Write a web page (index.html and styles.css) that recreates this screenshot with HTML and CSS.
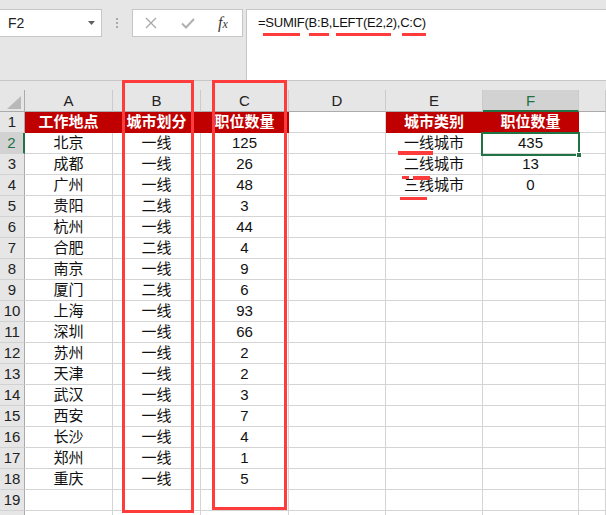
FILE: index.html
```html
<!DOCTYPE html>
<html lang="zh-CN">
<head>
<meta charset="utf-8">
<title>SUMIF 城市类别汇总</title>
<link rel="stylesheet" href="styles.css">
</head>
<body>
<div class="app">
  <header class="toolbar">
    <div class="namebox">
      <span class="name">F2</span>
      <svg class="dd" width="7" height="4" viewBox="0 0 7 4"><path d="M0 0H7L3.5 4Z"/></svg>
    </div>
    <div class="grip"><i></i><i></i><i></i></div>
    <div class="fbtns">
      <svg class="ic-x" width="12" height="12" viewBox="0 0 12 12"><path d="M1 1L11 11M11 1L1 11"/></svg>
      <svg class="ic-ok" width="14" height="11" viewBox="0 0 14 11"><path d="M1 5.5L5 9.5L13 1"/></svg>
      <span class="fx">f<span class="fx-x">x</span></span>
    </div>
    <div class="formula">=SUMIF(B:B,LEFT(E2,2),C:C)</div>
  </header>

  <div class="sheet">
    <div class="h corner"><svg width="14" height="13" viewBox="0 0 14 13"><path d="M14 0V13H0Z"/></svg></div>
    <div class="h">A</div><div class="h">B</div><div class="h">C</div><div class="h">D</div><div class="h">E</div><div class="h hs">F</div><div class="h"></div>

    <div class="r">1</div><div class="c t">工作地点</div><div class="c t">城市划分</div><div class="c t">职位数量</div><div class="c"></div><div class="c t">城市类别</div><div class="c t">职位数量</div><div class="c"></div>
    <div class="r rs">2</div><div class="c">北京</div><div class="c">一线</div><div class="c">125</div><div class="c"></div><div class="c">一线城市</div><div class="c sel">435</div><div class="c"></div>
    <div class="r">3</div><div class="c">成都</div><div class="c">一线</div><div class="c">26</div><div class="c"></div><div class="c">二线城市</div><div class="c">13</div><div class="c"></div>
    <div class="r">4</div><div class="c">广州</div><div class="c">一线</div><div class="c">48</div><div class="c"></div><div class="c">三线城市</div><div class="c">0</div><div class="c"></div>
    <div class="r">5</div><div class="c">贵阳</div><div class="c">二线</div><div class="c">3</div><div class="c"></div><div class="c"></div><div class="c"></div><div class="c"></div>
    <div class="r">6</div><div class="c">杭州</div><div class="c">一线</div><div class="c">44</div><div class="c"></div><div class="c"></div><div class="c"></div><div class="c"></div>
    <div class="r">7</div><div class="c">合肥</div><div class="c">二线</div><div class="c">4</div><div class="c"></div><div class="c"></div><div class="c"></div><div class="c"></div>
    <div class="r">8</div><div class="c">南京</div><div class="c">一线</div><div class="c">9</div><div class="c"></div><div class="c"></div><div class="c"></div><div class="c"></div>
    <div class="r">9</div><div class="c">厦门</div><div class="c">二线</div><div class="c">6</div><div class="c"></div><div class="c"></div><div class="c"></div><div class="c"></div>
    <div class="r">10</div><div class="c">上海</div><div class="c">一线</div><div class="c">93</div><div class="c"></div><div class="c"></div><div class="c"></div><div class="c"></div>
    <div class="r">11</div><div class="c">深圳</div><div class="c">一线</div><div class="c">66</div><div class="c"></div><div class="c"></div><div class="c"></div><div class="c"></div>
    <div class="r">12</div><div class="c">苏州</div><div class="c">一线</div><div class="c">2</div><div class="c"></div><div class="c"></div><div class="c"></div><div class="c"></div>
    <div class="r">13</div><div class="c">天津</div><div class="c">一线</div><div class="c">2</div><div class="c"></div><div class="c"></div><div class="c"></div><div class="c"></div>
    <div class="r">14</div><div class="c">武汉</div><div class="c">一线</div><div class="c">3</div><div class="c"></div><div class="c"></div><div class="c"></div><div class="c"></div>
    <div class="r">15</div><div class="c">西安</div><div class="c">一线</div><div class="c">7</div><div class="c"></div><div class="c"></div><div class="c"></div><div class="c"></div>
    <div class="r">16</div><div class="c">长沙</div><div class="c">一线</div><div class="c">4</div><div class="c"></div><div class="c"></div><div class="c"></div><div class="c"></div>
    <div class="r">17</div><div class="c">郑州</div><div class="c">一线</div><div class="c">1</div><div class="c"></div><div class="c"></div><div class="c"></div><div class="c"></div>
    <div class="r">18</div><div class="c">重庆</div><div class="c">一线</div><div class="c">5</div><div class="c"></div><div class="c"></div><div class="c"></div><div class="c"></div>
    <div class="r">19</div><div class="c"></div><div class="c"></div><div class="c"></div><div class="c"></div><div class="c"></div><div class="c"></div><div class="c"></div>
    <div class="r"></div><div class="c"></div><div class="c"></div><div class="c"></div><div class="c"></div><div class="c"></div><div class="c"></div><div class="c"></div>
  </div>

  <div class="frame frame-b"></div>
  <div class="frame frame-c"></div>
  <div class="ul ul-sumif"></div>
  <div class="ul ul-bb"></div>
  <div class="ul ul-left"></div>
  <div class="ul ul-cc"></div>
  <div class="ul ul-e1"></div>
  <div class="ul ul-e2a"></div>
  <div class="ul ul-e2b"></div>
  <div class="ul ul-e3"></div>
</div>
</body>
</html>
```

FILE: styles.css
```css
html, body {
  margin: 0;
  padding: 0;
}

body {
  width: 606px;
  height: 515px;
  overflow: hidden;
  background: #ffffff;
  font-family: "Liberation Sans", "Noto Sans CJK SC", sans-serif;
  color: #000;
}

.app {
  position: relative;
  width: 606px;
  height: 515px;
  overflow: hidden;
  background: #e6e6e6;
}

/* ---------- formula bar ---------- */
.toolbar {
  height: 81px;
  box-sizing: border-box;
  border-bottom: 1px solid #c6c6c6;
  display: flex;
  align-items: flex-start;
  padding-top: 9px;
}

.namebox {
  width: 102px;
  height: 28px;
  box-sizing: border-box;
  background: #fff;
  border: 1px solid #c6c6c6;
  border-left: 0;
  display: flex;
  align-items: center;
  padding-left: 8px;
  padding-right: 6px;
}

.name {
  flex: 1;
  font-size: 14px;
  color: #222;
}

.dd {
  fill: #5f5f5f;
}

.grip {
  width: 30px;
  height: 28px;
  display: flex;
  flex-direction: column;
  align-items: center;
  justify-content: center;
  gap: 2px;
}

.grip i {
  display: block;
  width: 2px;
  height: 2px;
  background: #a9a9a9;
}

.fbtns {
  width: 111px;
  height: 28px;
  box-sizing: border-box;
  background: #fff;
  border: 1px solid #c6c6c6;
  display: flex;
  align-items: center;
  padding-left: 12px;
}

.ic-x {
  fill: none;
  stroke: #a8a8a8;
  stroke-width: 1.3;
}

.ic-ok {
  margin-left: 24px;
  fill: none;
  stroke: #b0b0b0;
  stroke-width: 2;
}

.fx {
  margin-left: 23px;
  font-family: "Liberation Serif", serif;
  font-style: italic;
  font-size: 16px;
  color: #3a3a3a;
  line-height: 1;
}

.fx-x {
  font-size: 12px;
}

.formula {
  flex: 1;
  margin-left: 3px;
  height: 71px;
  box-sizing: border-box;
  background: #fff;
  border-top: 1px solid #c6c6c6;
  border-left: 1px solid #c6c6c6;
  padding-left: 11px;
  font-size: 13px;
  letter-spacing: -0.25px;
  line-height: 26px;
  color: #111;
  white-space: nowrap;
}

/* ---------- sheet ---------- */
.sheet {
  margin-top: 9px;
  display: grid;
  grid-template-columns: 25px 88px 88px 88px 97px 97px 96px 27px;
  grid-template-rows: 22px;
  grid-auto-rows: 21px;
  background: #fff;
}

.h {
  box-sizing: border-box;
  background: #e6e6e6;
  border-right: 1px solid #cbcbcb;
  border-bottom: 1px solid #ababab;
  text-align: center;
  font-size: 15px;
  line-height: 21px;
  color: #222;
}

.corner {
  border-right-color: #ababab;
  display: flex;
  align-items: flex-end;
  justify-content: flex-end;
  padding: 0 3px 2px 0;
}

.corner svg {
  fill: #b9b9b9;
}

.hs {
  background: #d2d2d2;
  color: #217346;
  border-bottom: 2px solid #217346;
}

.r {
  box-sizing: border-box;
  background: #e6e6e6;
  border-right: 1px solid #ababab;
  border-bottom: 1px solid #d2d2d2;
  text-align: center;
  font-size: 15px;
  line-height: 20px;
  color: #222;
}

.rs {
  background: #d2d2d2;
  color: #217346;
  border-right: 2px solid #217346;
}

.c {
  box-sizing: border-box;
  border-right: 1px solid #d4d4d4;
  border-bottom: 1px solid #d4d4d4;
  text-align: center;
  font-size: 15px;
  line-height: 20px;
  white-space: nowrap;
  color: #111;
}

.t {
  background: #c00000;
  border-color: #c00000;
  color: #fff;
  font-weight: bold;
}

.sel {
  position: relative;
}

.sel::after {
  content: "";
  position: absolute;
  top: -1px;
  left: -2px;
  right: -2px;
  bottom: -3px;
  border: 2px solid #217346;
}

.sel::before {
  content: "";
  position: absolute;
  right: -4px;
  bottom: -5px;
  width: 4px;
  height: 4px;
  background: #217346;
  border: 1px solid #fff;
  z-index: 1;
}

/* ---------- red annotations ---------- */
.frame {
  position: absolute;
  box-sizing: border-box;
  border: 3px solid #ff3c3c;
}

.frame-b {
  left: 122px;
  top: 80px;
  width: 72px;
  height: 433px;
}

.frame-c {
  left: 212px;
  top: 80px;
  width: 75px;
  height: 430px;
}

.ul {
  position: absolute;
  background: #ff3c3c;
  height: 3px;
}

.ul-sumif { left: 263px; top: 33px; width: 37px; }
.ul-bb    { left: 309px; top: 33px; width: 20px; }
.ul-left  { left: 336px; top: 33px; width: 55px; }
.ul-cc    { left: 402px; top: 33px; width: 24px; }
.ul-e1    { left: 398px; top: 151px; width: 35px; height: 4px; }
.ul-e2a   { left: 402px; top: 176px; width: 7px; }
.ul-e2b   { left: 413px; top: 176px; width: 17px; height: 4px; }
.ul-e3    { left: 400px; top: 197px; width: 27px; }
```
